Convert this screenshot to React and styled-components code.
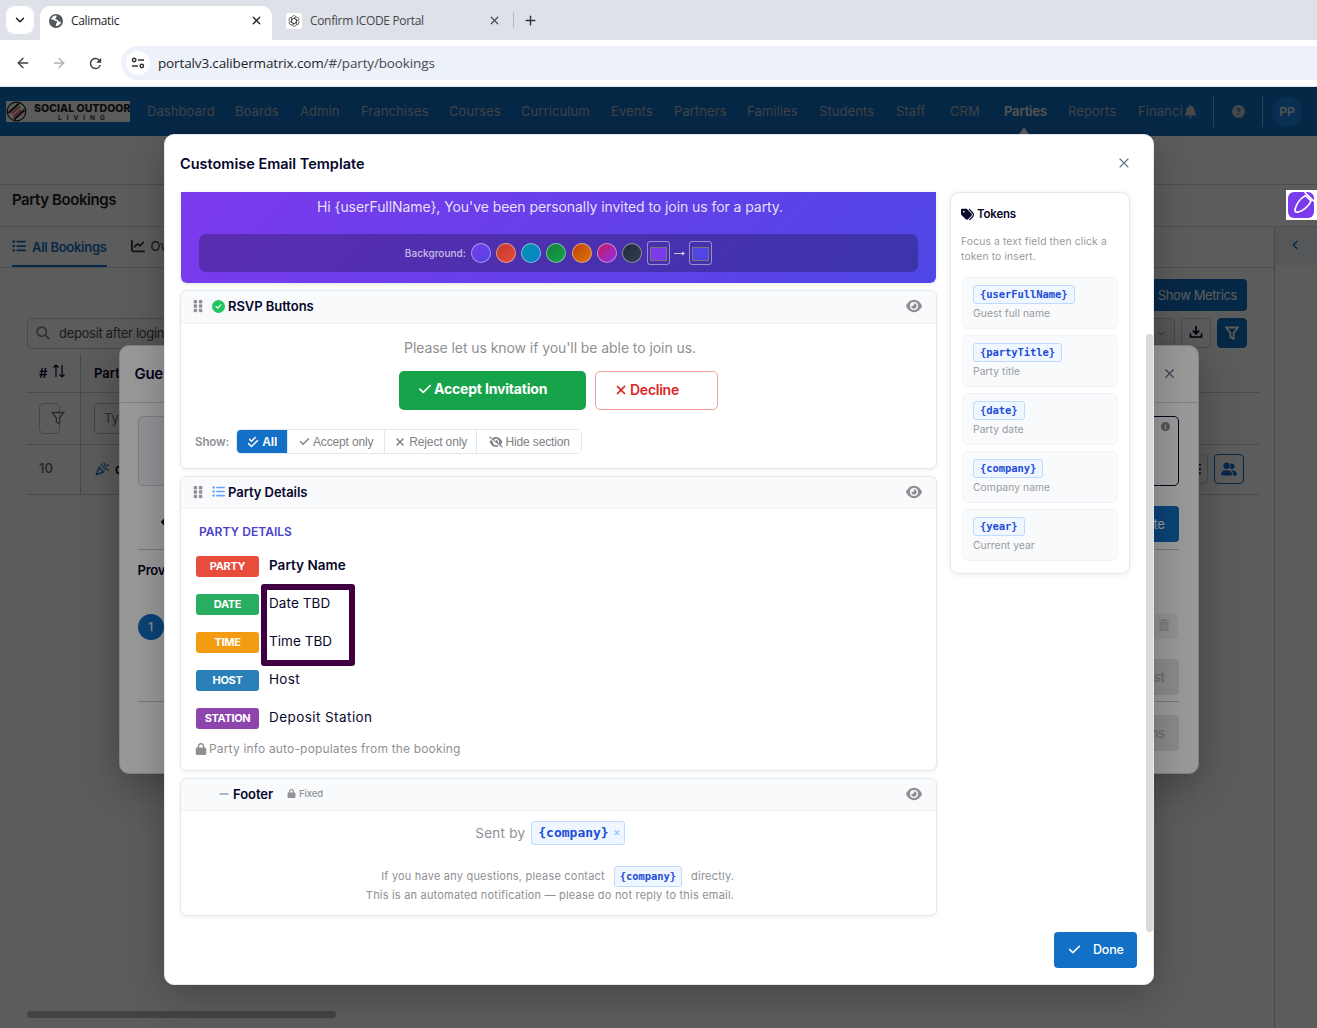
import React, { useState } from "react";
import styled, { createGlobalStyle } from "styled-components";
import {
  FaArrowLeft, FaBars, FaBell, FaChartLine, FaCheck, FaCheckDouble, FaCircleCheck, FaCircleInfo,
  FaCircleQuestion, FaEye, FaEyeSlash, FaGripVertical, FaListUl, FaLock, FaMinus,
  FaTags, FaTrashCan, FaUserGroup, FaXmark,
} from "react-icons/fa6";
import { LuArrowLeft, LuArrowRight, LuChevronDown, LuChevronLeft, LuPlus, LuX } from "react-icons/lu";
import { MdOutlineCelebration, MdRefresh } from "react-icons/md";

const GlobalStyle = createGlobalStyle`
  * { box-sizing: border-box; }
  body {
    margin: 0;
    overflow: hidden;
    font-family: Inter, sans-serif;
    font-size: 13px;
    color: #07072b;
  }
  svg { display: block; flex: none; }
  button { font-family: inherit; padding: 0; margin: 0; }
`;

const Window = styled.div`
  display: flex;
  flex-direction: column;
  width: 1317px;
  height: 1028px;
  overflow: hidden;
  background: #fff;
`;

/* browser chrome */

const TabStrip = styled.div`
  display: flex;
  align-items: flex-end;
  height: 40px;
  flex: none;
  padding-left: 6px;
  background: #dee1e8;
  font-family: "Open Sans", sans-serif;
`;

const TabSearch = styled.div`
  display: flex;
  align-items: center;
  justify-content: center;
  width: 28px;
  height: 28px;
  margin-bottom: 6px;
  border-radius: 9px;
  background: #fff;
  color: #1f1f1f;
`;

const BrowserTab = styled.div`
  display: flex;
  align-items: center;
  width: ${({ $width }) => $width}px;
  height: 34px;
  margin-left: ${({ $left }) => $left}px;
  padding: 0 9px 5px;
  border-radius: 10px 10px 0 0;
  background: ${({ $active }) => ($active ? "#fff" : "transparent")};
  color: ${({ $active }) => ($active ? "#1f1f1f" : "#45474a")};
`;

const TabTitle = styled.span`
  flex: 1;
  margin-left: 8px;
  font-size: 12px;
  line-height: 16px;
  letter-spacing: -0.33px;
`;

const TabEdge = styled.div`
  width: 1px;
  height: 16px;
  margin: 0 9px 12px 3px;
  background: #b8b9bd;
`;

const NewTab = styled.div`
  margin-bottom: 12px;
  color: #333;
`;

const Toolbar = styled.div`
  display: flex;
  align-items: center;
  height: 47px;
  flex: none;
  padding-left: 15px;
  border-bottom: 1px solid #dfe3e6;
  background: #fff;
  color: #3c4043;
`;

const ToolIcon = styled.div`
  width: 36px;
  color: ${({ $dim }) => ($dim ? "#aeb0b2" : "#3c4043")};
`;

const AddressBar = styled.div`
  display: flex;
  align-items: center;
  flex: 1;
  height: 34px;
  margin-left: -2px;
  padding-left: 5px;
  border-radius: 17px 0 0 17px;
  background: #ecf1fa;
  font-family: "Open Sans", sans-serif;
  font-size: 13.5px;
  letter-spacing: -0.14px;
  color: #1f1f1f;

  span { color: #474a4e; }
`;

const SiteInfo = styled.div`
  display: flex;
  align-items: center;
  justify-content: center;
  width: 24px;
  height: 24px;
  margin-right: 8px;
  border-radius: 50%;
  background: #fff;
`;

/* application */

const Viewport = styled.div`
  position: relative;
  flex: 1;
  min-height: 0;
`;

const Page = styled.div`
  display: flex;
  flex-direction: column;
  height: 100%;
  background: #fff;
`;

const Navbar = styled.nav`
  display: flex;
  align-items: center;
  height: 49px;
  flex: none;
  padding-left: 6px;
  background: #1270c6;
`;

const Brand = styled.div`
  display: flex;
  align-items: center;
  width: 124px;
  height: 21px;
  margin-right: 17px;
  overflow: hidden;
  background: #fdfdfd;
  color: #222;
`;

const BrandText = styled.div`
  margin: 1px 0 0 7px;
  font-size: 10.5px;
  font-weight: 800;
  line-height: 11px;
  letter-spacing: 0.05px;
  white-space: nowrap;

  small {
    display: block;
    padding-left: 24px;
    font-size: 6.5px;
    font-weight: 600;
    line-height: 8px;
    letter-spacing: 5px;
  }
`;

const NavItem = styled.div`
  position: relative;
  flex: none;
  width: ${({ $width }) => $width}px;
  height: 49px;
  line-height: 49px;
  letter-spacing: ${({ $active }) => ($active ? "-0.15px" : "0.08px")};
  overflow: hidden;
  white-space: nowrap;
  color: ${({ $active }) => ($active ? "#eee" : "#b4bac0")};
  font-weight: ${({ $active }) => ($active ? 600 : 400)};

  &::after {
    content: "";
    display: ${({ $active }) => ($active ? "block" : "none")};
    position: absolute;
    left: 14px;
    bottom: 0;
    border: 6px solid transparent;
    border-top: 0;
    border-bottom-color: #fff;
    border-bottom-width: 9px;
  }
`;

const NavTools = styled.div`
  display: flex;
  align-items: center;
  height: 31px;
  color: #c6c8ca;
`;

const NavTool = styled.div`
  display: flex;
  align-items: center;
  justify-content: center;
  width: ${({ $width }) => $width}px;
  height: 31px;
  border-right: 1px solid rgba(255, 255, 255, 0.5);
`;

const Avatar = styled.div`
  width: 30px;
  height: 30px;
  margin-left: 9px;
  border-radius: 50%;
  background: #1a86e8;
  color: #e6e6e6;
  font-size: 12px;
  font-weight: 600;
  line-height: 30px;
  text-align: center;
`;

const TopBand = styled.div`
  height: 49px;
  flex: none;
  border-bottom: 1px solid #d2d5da;
`;

const PageTitle = styled.div`
  height: 42px;
  flex: none;
  padding: 5px 12px;
  border-bottom: 1px solid #d2d5da;
  font-size: 15px;
  font-weight: 600;
  line-height: 20px;
  letter-spacing: -0.42px;
  color: #222;
`;

const PageBody = styled.div`
  display: flex;
  flex: 1;
  min-height: 0;
`;

const Main = styled.div`
  display: flex;
  flex-direction: column;
  width: 1274px;
`;

const PageTabs = styled.div`
  display: flex;
  height: 41px;
  flex: none;
  padding-left: 12px;
  border-bottom: 1px solid #d2d5da;
`;

const PageTab = styled.div`
  display: flex;
  align-items: center;
  gap: 6px;
  height: 40px;
  margin-right: 24px;
  padding-bottom: 1px;
  border-bottom: 2px solid ${({ $active }) => ($active ? "#1270c6" : "transparent")};
  color: ${({ $active }) => ($active ? "#1270c6" : "#333")};
  font-weight: ${({ $active }) => ($active ? 600 : 400)};
  letter-spacing: -0.28px;

  span { padding-top: ${({ $active }) => ($active ? 3 : 1)}px; }
`;

const ActionRow = styled.div`
  display: flex;
  align-items: center;
  justify-content: space-between;
  gap: 6px;
  height: ${({ $height }) => $height}px;
  margin-top: ${({ $top }) => $top}px;
  padding: 0 27px;
`;

const RightGroup = styled.div`
  display: flex;
  gap: 6px;
  margin-left: auto;
`;

const PrimaryButton = styled.button`
  display: flex;
  align-items: center;
  justify-content: flex-end;
  width: ${({ $width }) => $width}px;
  height: ${({ $height }) => $height}px;
  padding-right: ${({ $pad }) => $pad}px;
  border: 0;
  border-radius: 4px;
  background: #1270c6;
  color: #fff;
  font-size: 13px;
  letter-spacing: -0.4px;
`;

const MutedButton = styled(PrimaryButton)`
  background: #e6e6e6;
  color: #b4b4b4;
  font-weight: 500;
`;

const SearchField = styled.div`
  display: flex;
  align-items: center;
  gap: 9px;
  width: 230px;
  height: 31px;
  padding-left: 8px;
  border: 1px solid #cbcdd2;
  border-radius: 5px;
  color: #505050;
  letter-spacing: -0.3px;
`;

const SquareButton = styled.div`
  display: flex;
  align-items: center;
  justify-content: center;
  width: ${({ $width }) => $width || 30}px;
  height: 30px;
  border: 1px solid ${({ $border }) => $border || "#cbcdd2"};
  border-radius: 4px;
  background: ${({ $fill }) => $fill || "transparent"};
  color: ${({ $color }) => $color || "#07072b"};
`;

const Table = styled.div`
  display: flex;
  flex-direction: column;
  width: 1233px;
  margin: 5px 0 0 27px;
`;

const TableRow = styled.div`
  display: flex;
  height: ${({ $height }) => $height}px;
  border-bottom: 1px solid #cfd1d4;
`;

const IndexCell = styled.div`
  display: flex;
  align-items: center;
  gap: 5px;
  width: 54px;
  padding: 0 0 ${({ $muted }) => ($muted ? 4 : 1)}px 12px;
  border-right: 1px solid #c8cace;
  color: ${({ $muted }) => ($muted ? "#666" : "#07072b")};
  font-weight: ${({ $muted }) => ($muted ? 500 : 600)};
`;

const TableCell = styled.div`
  display: flex;
  align-items: center;
  flex: 1;
  gap: 5px;
  padding: 0 16px 1px 13px;
  font-weight: 600;
`;

const FilterBox = styled.div`
  display: flex;
  align-items: center;
  width: ${({ $width }) => $width}px;
  height: 31px;
  padding-left: ${({ $pad }) => $pad}px;
  border: 1px solid #c2c4c9;
  border-radius: 5px;
  font-weight: 400;
  color: #77797f;
`;

const BottomScroll = styled.div`
  width: 309px;
  height: 7px;
  margin: auto 0 10px 27px;
  border-radius: 4px;
  background: #bbb;
`;

const SidePanel = styled.div`
  width: 43px;
  border-left: 1px solid #c8cace;
`;

const SideToggle = styled.div`
  display: flex;
  align-items: center;
  justify-content: center;
  height: 38px;
  padding: 0 2px 2px 0;
  background: #edf3f8;
  color: #1270c6;
`;

const Overlay = styled.div`
  position: absolute;
  inset: 0;
  display: flex;
  align-items: center;
  justify-content: center;
  padding-top: 4px;
  background: rgba(0, 0, 0, 0.4);
`;

/* guests dialog, behind */

const GuestDialog = styled.div`
  display: flex;
  flex-direction: column;
  width: 1080px;
  height: 429px;
  border: 1px solid #d5d8dd;
  border-radius: 10px;
  background: #fff;
  box-shadow: 0 10px 40px rgba(0, 0, 0, 0.3);
`;

const GuestHeader = styled.div`
  display: flex;
  align-items: center;
  justify-content: space-between;
  height: 57px;
  padding: 0 21px 1px 15px;
  border-bottom: 1px solid #d5d8dd;
  font-size: 15px;
  font-weight: 600;
  letter-spacing: -0.3px;
`;

const GuestBody = styled.div`
  display: flex;
  flex-direction: column;
  padding: 13px 19px 0 18px;
`;

const GuestRow = styled.div`
  display: flex;
  align-items: center;
  justify-content: space-between;
  height: ${({ $height }) => $height}px;
  padding: ${({ $top }) => $top || 0}px ${({ $pad }) => $pad || 0}px ${({ $bottom }) => $bottom || 0}px 0;
  border-bottom: ${({ $line }) => ($line ? "1px solid #c6c8cc" : "0")};
`;

const InfoCard = styled.div`
  display: flex;
  justify-content: flex-end;
  width: 340px;
  height: 70px;
  padding: 5px 8px;
  border: 1px solid ${({ $selected }) => ($selected ? "#07072b" : "#cfd4da")};
  border-radius: 5px;
  background: ${({ $selected }) => ($selected ? "#fff" : "#f3f6fb")};
  color: #8b8f96;
`;

const GuestLabel = styled.div`
  font-weight: 600;
  letter-spacing: -0.2px;
`;

const StepCircle = styled.div`
  width: 26px;
  height: 26px;
  border-radius: 50%;
  background: #1270c6;
  color: #ddd;
  font-size: 12px;
  font-weight: 600;
  line-height: 25px;
  text-align: center;
`;

const TrashButton = styled.div`
  display: flex;
  align-items: center;
  justify-content: flex-end;
  width: 40px;
  height: 25px;
  padding: 0 8px 3px 0;
  border-radius: 4px;
  background: #f2f2f2;
  color: #ccc;
`;

/* template dialog */

const Dialog = styled.div`
  display: flex;
  flex-direction: column;
  width: 990px;
  height: 851px;
  margin-left: 1px;
  border: 1px solid #e2e8f0;
  border-radius: 10px;
  background: #fff;
  box-shadow: 0 10px 40px rgba(0, 0, 0, 0.25);
`;

const DialogHeader = styled.div`
  display: flex;
  align-items: center;
  justify-content: space-between;
  height: 57px;
  flex: none;
  padding: 0 21px 1px 15px;
  color: #64748b;

  h2 {
    margin: 0;
    font-size: 14.5px;
    font-weight: 600;
    color: #07072b;
  }
`;

const DialogBody = styled.div`
  display: flex;
  height: 740px;
  flex: none;
  padding-left: 15px;
`;

const Editor = styled.div`
  width: 757px;
  height: 740px;
`;

const Sidebar = styled.div`
  width: 180px;
  margin-left: 13px;
`;

const ScrollTrack = styled.div`
  margin-left: auto;
  padding-top: 142px;
`;

const ScrollThumb = styled.div`
  width: 7px;
  height: 598px;
  border-radius: 4px;
  background: #dadada;
`;

const Hero = styled.div`
  display: flex;
  flex-direction: column;
  height: 91px;
  margin: 0 1px 7px;
  padding: 5px 18px 11px;
  border-radius: 0 0 6px 6px;
  background: linear-gradient(135deg, #7c3aed 0%, #4f46e5 100%);
  box-shadow: 0 1px 4px rgba(15, 23, 42, 0.12);
  color: rgba(255, 255, 255, 0.85);
  text-align: center;
`;

const HeroText = styled.div`
  flex: 1;
  padding-right: 17px;
  font-size: 14px;
  line-height: 19px;
  letter-spacing: -0.07px;
`;

const SwatchBar = styled.div`
  display: flex;
  align-items: center;
  justify-content: center;
  gap: 4px;
  height: 38px;
  border-radius: 7px;
  background: rgba(0, 0, 0, 0.25);
  font-size: 10px;
  font-weight: 500;
  letter-spacing: 0.05px;
  color: rgba(255, 255, 255, 0.7);
`;

const Swatch = styled.span`
  width: 20px;
  height: 20px;
  margin: 0 0.2px 0 1px;
  border: 1px solid rgba(255, 255, 255, 0.45);
  border-radius: 50%;
  background: linear-gradient(135deg, ${({ $from }) => $from}, ${({ $to }) => $to});
`;

const ColorWell = styled.span`
  width: 23px;
  height: 24px;
  margin-left: ${({ $gap }) => $gap || 0}px;
  padding: 5px 2px;
  border: 1px solid rgba(255, 255, 255, 0.45);
  border-radius: 3px;

  &::before {
    content: "";
    display: block;
    height: 12px;
    border: 1px solid #767676;
    background: ${({ $color }) => $color};
  }
`;

const Section = styled.section`
  height: ${({ $height }) => $height}px;
  margin-bottom: 7px;
  border: 1px solid #e2e8f0;
  border-radius: 7px;
  background: #fff;
  box-shadow: 0 1px 4px rgba(15, 23, 42, 0.07);
`;

const SectionHeader = styled.div`
  display: flex;
  align-items: center;
  height: ${({ $height }) => $height || 32}px;
  padding: 0 14px 2px ${({ $left }) => $left || 10}px;
  border-bottom: 1px solid #eef2f6;
  border-radius: 7px 7px 0 0;
  background: #f8fafc;
  color: #8f9094;
`;

const SectionName = styled.span`
  margin-left: 3px;
  margin-right: ${({ $tagged }) => ($tagged ? 0 : "auto")};
  font-size: 13px;
  font-weight: 600;
  letter-spacing: -0.05px;
  color: #07072b;
`;

const SectionIcon = styled.span`
  margin-left: ${({ $gap }) => $gap}px;
  color: ${({ $color }) => $color};
`;

const FixedTag = styled.span`
  display: flex;
  align-items: center;
  gap: 3px;
  margin: 0 auto 0 14px;
  font-size: 9.5px;
  font-weight: 500;
  letter-spacing: -0.1px;
  color: #909296;
`;

const RsvpBody = styled.div`
  padding: 14px;
`;

const RsvpText = styled.div`
  padding-right: 17px;
  font-size: 14px;
  line-height: 19px;
  letter-spacing: -0.07px;
  text-align: center;
  color: #8f9094;
`;

const ReplyButtons = styled.div`
  display: flex;
  justify-content: center;
  gap: 9px;
  margin: 14px 0 19px;
`;

const ReplyButton = styled.button`
  display: flex;
  align-items: center;
  gap: 2px;
  width: ${({ $accept }) => ($accept ? 187 : 123)}px;
  height: 39px;
  padding: 0 0 ${({ $accept }) => ($accept ? 4 : 2)}px ${({ $accept }) => ($accept ? 19 : 18)}px;
  border: ${({ $accept }) => ($accept ? "0" : "1px solid #f79d9d")};
  border-radius: 5px;
  background: ${({ $accept }) => ($accept ? "#16a34a" : "#fff")};
  color: ${({ $accept }) => ($accept ? "#fff" : "#dc2626")};
  font-size: 14px;
  font-weight: ${({ $accept }) => ($accept ? 700 : 600)};
  letter-spacing: ${({ $accept }) => ($accept ? "-0.18px" : "-0.25px")};
`;

const ShowRow = styled.div`
  display: flex;
  align-items: center;
  font-size: 11.5px;
  font-weight: 600;
  letter-spacing: -0.1px;
  color: #8f9094;
`;

const Segments = styled.div`
  display: flex;
  height: 25px;
  margin-left: 7px;
  border: 1px solid #e2e8f0;
  border-radius: 5px;
  overflow: hidden;
`;

const Segment = styled.button`
  display: flex;
  align-items: center;
  justify-content: center;
  gap: 3px;
  width: ${({ $width }) => $width}px;
  border: 0;
  border-left: ${({ $active }) => ($active ? "0" : "1px solid #e2e8f0")};
  background: ${({ $active }) => ($active ? "#1270c6" : "#fff")};
  color: ${({ $active }) => ($active ? "#fff" : "#808186")};
  font-family: "Liberation Sans", sans-serif;
  font-size: 12px;
  font-weight: ${({ $active }) => ($active ? 700 : 400)};
  letter-spacing: -0.15px;
  white-space: nowrap;
`;

const DetailsBody = styled.div`
  padding: 15px;
`;

const DetailsTitle = styled.div`
  margin: 0 0 17px 3px;
  font-size: 12px;
  font-weight: 600;
  line-height: 15px;
  letter-spacing: 0.04px;
  color: #4b3fce;
`;

const DetailRow = styled.div`
  display: flex;
  height: 38px;
`;

const Badge = styled.span`
  width: 63px;
  height: 21px;
  border-radius: 3px;
  background: ${({ $color }) => $color};
  color: #fff;
  font-size: 11px;
  font-weight: 700;
  line-height: 21px;
  letter-spacing: -0.35px;
  text-align: center;
`;

const DetailValue = styled.span`
  margin-left: 10px;
  font-size: 13.5px;
  font-weight: ${({ $bold }) => ($bold ? 600 : 400)};
  line-height: 19px;
  letter-spacing: ${({ $spacing }) => $spacing}px;
`;

const Note = styled.div`
  display: flex;
  align-items: center;
  gap: 2px;
  margin: -5px 0 0 -1px;
  font-size: 12px;
  line-height: 16px;
  letter-spacing: 0.17px;
  color: #8f9094;
`;

const FooterBody = styled.div`
  display: flex;
  flex-direction: column;
  align-items: center;
  padding: 10px 17px 0 0;
  color: #8f9094;
`;

const SentBy = styled.div`
  display: flex;
  align-items: center;
  gap: 6px;
  height: 24px;
  font-size: 13.5px;
  letter-spacing: 0.24px;
`;

const Chip = styled.span`
  display: inline-flex;
  align-items: center;
  gap: 5px;
  height: ${({ $height }) => $height || 19}px;
  padding: 0 ${({ $pad }) => $pad || 6}px 1px;
  border: 1px solid #bfdbfe;
  border-radius: 3px;
  background: #eff6ff;
  color: #1d4ed8;
  font-family: "DejaVu Sans Mono", monospace;
  font-size: ${({ $size }) => $size || 10.5}px;
  font-weight: 700;
  letter-spacing: ${({ $size }) => ($size ? 0 : -0.07)}px;

  i {
    margin-right: -2px;
    font-style: normal;
    font-size: 10px;
    color: #93c5fd;
  }
`;

const SmallPrint = styled.div`
  margin-top: 21px;
  font-size: 11px;
  letter-spacing: 0.2px;
  line-height: 18px;

  ${Chip} { margin: 0 9px; padding: 0 5px 1px; }
  div { display: flex; align-items: center; justify-content: flex-end; height: 20px; }
  div + div { height: 18px; }
`;

const TokenPanel = styled.div`
  height: 382px;
  padding: 14px 11px 0 10px;
  border: 1px solid #e2e8f0;
  border-radius: 9px;
  box-shadow: 0 1px 6px rgba(15, 23, 42, 0.08);
`;

const TokenTitle = styled.div`
  display: flex;
  align-items: center;
  gap: 3px;
  font-size: 11.5px;
  font-weight: 600;
  line-height: 15px;
  letter-spacing: -0.2px;
`;

const TokenHint = styled.p`
  margin: 12px 0 13px;
  font-size: 10.3px;
  line-height: 15px;
  letter-spacing: 0.14px;
  color: #999a9e;
`;

const TokenCard = styled.div`
  height: 52px;
  margin: 0 0 6px 1px;
  padding: 7px 10px;
  border: 1px solid #eff3f7;
  border-radius: 6px;
  background: #f8fafc;
  color: #999a9e;

  div {
    margin-top: 3px;
    font-size: 10.3px;
    line-height: 13px;
    letter-spacing: 0.06px;
  }
`;

const DialogFooter = styled.div`
  display: flex;
  justify-content: flex-end;
  padding-right: 16px;
`;

const DoneButton = styled.button`
  display: flex;
  align-items: center;
  gap: 12px;
  width: 83px;
  height: 36px;
  padding: 0 0 1px 14px;
  border: 0;
  border-radius: 4px;
  background: #1270c6;
  color: #fff;
  font-size: 12.5px;
  font-weight: 500;
  letter-spacing: -0.2px;
`;

/* things floating above the page */

const Marker = styled.div`
  position: absolute;
  left: 261px;
  top: 497px;
  width: 94px;
  height: 82px;
  border: 6px solid #3e0040;
  border-radius: 3px;
`;

const EditTool = styled.div`
  position: absolute;
  right: 0;
  top: 103px;
  width: 31px;
  height: 30px;
  padding: 2px;
  background: #fff;
`;

const NAV = [
  ["Dashboard", 88], ["Boards", 65], ["Admin", 61], ["Franchises", 88], ["Courses", 72],
  ["Curriculum", 90], ["Events", 63], ["Partners", 73], ["Families", 72], ["Students", 77],
  ["Staff", 54], ["CRM", 54], ["Parties", 64], ["Reports", 70], ["Financials", 45],
];

const SWATCHES = [
  ["#7c3aed", "#4f46e5"], ["#c0392b", "#e74c3c"], ["#0891b2", "#0284c7"], ["#15803d", "#16a34a"],
  ["#c2410c", "#d97706"], ["#be185d", "#9333ea"], ["#1e293b", "#334155"],
];

const DETAILS = [
  ["PARTY", "#e74c3c", "Party Name", 0.03],
  ["DATE", "#27ae60", "Date TBD", 0.1],
  ["TIME", "#f39c12", "Time TBD", 0.05],
  ["HOST", "#2980b9", "Host", 0.3],
  ["STATION", "#8e44ad", "Deposit Station", 0.43],
];

const TOKENS = [
  ["userFullName", "Guest full name"],
  ["partyTitle", "Party title"],
  ["date", "Party date"],
  ["company", "Company name"],
  ["year", "Current year"],
];

const FILTERS = [
  ["All", 50, <FaCheckDouble size={12} />],
  ["Accept only", 97, <FaCheck size={11} />],
  ["Reject only", 92, <FaXmark size={12} />],
  ["Hide section", 105, <FaEyeSlash size={14} />],
];

const GlobeIcon = () => (
  <svg width="14" height="14" viewBox="0 0 14 14">
    <circle cx="7" cy="7" r="7" fill="#54585d" />
    <path d="M7.4 1.6C5 1.5 2.7 3 2 5.2l2.4.5c1 .3 1.2 1.2 2.5 1.3 1.6.1 1.7 1.2.8 1.9-.8.6-.8 1.6-.8 3.2 2.5.1 4.7-1.7 5.2-4L9.6 7.5C8.800 6.500 8.900 5.600 7.500 5.500 6.100 5.400 5.800 4.500 6.800 3.900 7.600 3.400 7.700 2.500 7.400 1.600z" fill="#fff" />
  </svg>
);

const ChatIcon = () => (
  <svg width="16" height="16" viewBox="0 0 16 16">
    <rect width="16" height="16" rx="2" fill="#fff" />
    <g fill="none" stroke="#444" strokeWidth="0.75">
      {[0, 60, 120, 180, 240, 300].map((a) => (
        <path key={a} transform={`rotate(${a} 8 8)`} d="M5.6 9.3V5a2.300 2.300 0 0 1 4.300-1.200M5.600 6.700l3.300-1.900" />
      ))}
    </g>
  </svg>
);

const TuneIcon = () => (
  <svg width="14" height="14" viewBox="0 0 14 14" fill="none" stroke="#333" strokeWidth="1.5">
    <circle cx="3.200" cy="4" r="1.700" />
    <path d="M7 4h6M1 10h6" />
    <circle cx="10.800" cy="10" r="1.700" />
  </svg>
);

const BrandMark = () => (
  <svg width="21" height="21" viewBox="0 0 21 21" fill="none">
    <circle cx="10.500" cy="10.500" r="9.300" stroke="#222" strokeWidth="1.200" />
    <path d="M2.500 12 13 2.500M8 18.500 18.500 9" stroke="#222" strokeWidth="2.200" />
    <path d="M6 12.500 14 5.500M7.500 15.500 15 9" stroke="#e0623a" strokeWidth="1.700" />
  </svg>
);

const SearchIcon = () => (
  <svg width="14" height="14" viewBox="0 0 14 14" fill="none" stroke="#7b8794" strokeWidth="1.700">
    <circle cx="5.700" cy="5.700" r="4.600" />
    <path d="m9.200 9.200 4 4" />
  </svg>
);

const SortIcon = () => (
  <svg width="14" height="20" viewBox="0 0 14 20" fill="none" stroke="#07072b" strokeWidth="1.200">
    <path d="M4 14V2M1.500 4.500 4 2l2.500 2.500M10 2v12M7.500 11.500 10 14l2.500-2.500" />
  </svg>
);

const FunnelIcon = ({ width = 1.3 }) => (
  <svg width="14" height="14" viewBox="0 0 14 14" fill="none" stroke="currentColor" strokeWidth={width}>
    <path d="M1.200 1.500h11.600L8.600 7v5.800l-3.200-1.600V7z" />
  </svg>
);

const DownloadIcon = () => (
  <svg width="14" height="16" viewBox="0 0 14 16" fill="none" stroke="currentColor" strokeWidth="1.700">
    <path d="M7 1v7.500M3.800 5.600 7 8.700l3.200-3.100M1.500 8.500v3.500h11V8.500" />
  </svg>
);

const LongArrow = () => (
  <svg width="11" height="7" viewBox="0 0 11 7" fill="none" stroke="currentColor">
    <path d="M0 3.500h10" />
    <path d="m8 1.500 3 2-3 2z" fill="currentColor" stroke="none" />
  </svg>
);

const PenIcon = () => (
  <svg width="26" height="26" viewBox="0 0 26 26">
    <rect width="26" height="26" rx="6" fill="#7c3aed" />
    <path
      d="M17.500 3.500 23 9c-2 4.500-7 9.500-12.500 11-2.800.7-4-.5-3.300-3.200C8.500 11.500 13 6 17.500 3.500zM16.500 0l9.500 9.500"
      fill="none" stroke="#fff" strokeWidth="1.700"
    />
  </svg>
);

const Browser = () => (
  <>
    <TabStrip>
      <TabSearch><LuChevronDown size={14} strokeWidth={2.5} /></TabSearch>
      <BrowserTab $active $width={232} $left={6}>
        <GlobeIcon />
        <TabTitle>Calimatic</TabTitle>
        <LuX size={13} strokeWidth={2.3} />
      </BrowserTab>
      <BrowserTab $width={233} $left={5}>
        <ChatIcon />
        <TabTitle>Confirm ICODE Portal</TabTitle>
        <LuX size={13} strokeWidth={2.2} />
      </BrowserTab>
      <TabEdge />
      <NewTab><LuPlus size={15} strokeWidth={2.2} /></NewTab>
    </TabStrip>
    <Toolbar>
      <ToolIcon><LuArrowLeft size={16} /></ToolIcon>
      <ToolIcon $dim><LuArrowRight size={16} /></ToolIcon>
      <ToolIcon><MdRefresh size={17} /></ToolIcon>
      <AddressBar>
        <SiteInfo><TuneIcon /></SiteInfo>
        portalv3.calibermatrix.com<span>/#/party/bookings</span>
      </AddressBar>
    </Toolbar>
  </>
);

const Bookings = () => (
  <Page>
    <Navbar>
      <Brand>
        <BrandMark />
        <BrandText>SOCIAL OUTDOOR<small>LIVING</small></BrandText>
      </Brand>
      {NAV.map(([name, width]) => (
        <NavItem key={name} $width={width} $active={name === "Parties"}>{name}</NavItem>
      ))}
      <NavTools>
        <NavTool $width={31}><FaBell size={13} style={{ marginRight: 15 }} /></NavTool>
        <NavTool $width={49}><FaCircleQuestion size={13} /></NavTool>
        <Avatar>PP</Avatar>
      </NavTools>
    </Navbar>
    <TopBand />
    <PageTitle>Party Bookings</PageTitle>
    <PageBody>
      <Main>
        <PageTabs>
          <PageTab $active><FaListUl size={14} /> <span>All Bookings</span></PageTab>
          <PageTab><FaChartLine size={14} /> <span>Overview</span></PageTab>
        </PageTabs>
        <ActionRow $top={11} $height={32}>
          <RightGroup>
            <PrimaryButton $width={130} $height={32} $pad={10}>Show Metrics</PrimaryButton>
          </RightGroup>
        </ActionRow>
        <ActionRow $top={6} $height={32}>
          <SearchField><SearchIcon /> deposit after login</SearchField>
          <RightGroup>
            <SquareButton $width={50} $fill="#f4f7fa" $color="#777"><LuChevronDown size={11} style={{ marginLeft: 22 }} /></SquareButton>
            <SquareButton><DownloadIcon /></SquareButton>
            <SquareButton $fill="#1270c6" $border="#1270c6" $color="#fff"><FunnelIcon width={1.8} /></SquareButton>
          </RightGroup>
        </ActionRow>
        <Table>
          <TableRow $height={39}>
            <IndexCell># <SortIcon /></IndexCell>
            <TableCell>Party</TableCell>
          </TableRow>
          <TableRow $height={52}>
            <IndexCell><FilterBox $width={21} $pad={11}><FunnelIcon /></FilterBox></IndexCell>
            <TableCell><FilterBox $width={120} $pad={9}>Type</FilterBox></TableCell>
          </TableRow>
          <TableRow $height={50}>
            <IndexCell $muted>10</IndexCell>
            <TableCell>
              <MdOutlineCelebration size={16} color="#1270c6" /> deposit
              <RightGroup>
                <SquareButton $width={60}><FaBars size={14} style={{ marginLeft: 34 }} /></SquareButton>
                <SquareButton $border="#1270c6" $color="#1270c6"><FaUserGroup size={16} /></SquareButton>
              </RightGroup>
            </TableCell>
          </TableRow>
        </Table>
        <BottomScroll />
      </Main>
      <SidePanel>
        <SideToggle><LuChevronLeft size={14} strokeWidth={2.5} /></SideToggle>
      </SidePanel>
    </PageBody>
  </Page>
);

const Guests = () => (
  <GuestDialog>
    <GuestHeader>Guests <LuX size={15} color="#64748b" /></GuestHeader>
    <GuestBody>
      <GuestRow $height={70}>
        <InfoCard />
        <InfoCard $selected><FaCircleInfo size={9} /></InfoCard>
      </GuestRow>
      <GuestRow $height={64} $top={12} $line>
        <FaArrowLeft size={16} style={{ marginLeft: 22, marginBottom: 4 }} />
        <PrimaryButton $width={90} $height={36} $pad={14}>Update</PrimaryButton>
      </GuestRow>
      <GuestRow $height={40}><GuestLabel>Provide guests</GuestLabel></GuestRow>
      <GuestRow $height={73} $pad={1}>
        <StepCircle>1</StepCircle>
        <TrashButton><FaTrashCan size={12} /></TrashButton>
      </GuestRow>
      <GuestRow $height={39} $bottom={10} $line>
        <span />
        <MutedButton $width={90} $height={36} $pad={14}>Add Guest</MutedButton>
      </GuestRow>
      <GuestRow $height={62}>
        <span />
        <MutedButton $width={90} $height={36} $pad={14}>Invitations</MutedButton>
      </GuestRow>
    </GuestBody>
  </GuestDialog>
);

const Template = () => {
  const [show, setShow] = useState("All");

  return (
    <Dialog>
      <DialogHeader>
        <h2>Customise Email Template</h2>
        <LuX size={16} strokeWidth={1.7} />
      </DialogHeader>
      <DialogBody>
        <Editor>
          <Hero>
            <HeroText>Hi {"{userFullName}"}, You've been personally invited to join us for a party.</HeroText>
            <SwatchBar>
              Background:
              {SWATCHES.map(([from, to]) => <Swatch key={from} $from={from} $to={to} />)}
              <ColorWell $gap={1} $color="#7c3aed" />
              <LongArrow />
              <ColorWell $color="#4f46e5" />
            </SwatchBar>
          </Hero>

          <Section $height={179}>
            <SectionHeader $height={33}>
              <FaGripVertical size={14} />
              <SectionIcon $gap={7} $color="#22c55e"><FaCircleCheck size={13} /></SectionIcon>
              <SectionName>RSVP Buttons</SectionName>
              <FaEye size={16} />
            </SectionHeader>
            <RsvpBody>
              <RsvpText>Please let us know if you'll be able to join us.</RsvpText>
              <ReplyButtons>
                <ReplyButton $accept><FaCheck size={14} /> Accept Invitation</ReplyButton>
                <ReplyButton><FaXmark size={14} /> Decline</ReplyButton>
              </ReplyButtons>
              <ShowRow>
                Show:
                <Segments>
                  {FILTERS.map(([name, width, icon]) => (
                    <Segment key={name} $width={width} $active={show === name} onClick={() => setShow(name)}>
                      {icon} {name}
                    </Segment>
                  ))}
                </Segments>
              </ShowRow>
            </RsvpBody>
          </Section>

          <Section $height={295}>
            <SectionHeader>
              <FaGripVertical size={14} />
              <SectionIcon $gap={7} $color="#60a5fa"><FaListUl size={13} /></SectionIcon>
              <SectionName>Party Details</SectionName>
              <FaEye size={16} />
            </SectionHeader>
            <DetailsBody>
              <DetailsTitle>PARTY DETAILS</DetailsTitle>
              {DETAILS.map(([label, color, value, spacing], i) => (
                <DetailRow key={label}>
                  <Badge $color={color}>{label}</Badge>
                  <DetailValue $bold={i === 0} $spacing={spacing}>{value}</DetailValue>
                </DetailRow>
              ))}
              <Note><FaLock size={12} /> Party info auto-populates from the booking</Note>
            </DetailsBody>
          </Section>

          <Section $height={138}>
            <SectionHeader $left={37}>
              <SectionIcon $gap={0} $color="#94a3b8"><FaMinus size={12} /></SectionIcon>
              <SectionName $tagged>Footer</SectionName>
              <FixedTag><FaLock size={9} /> Fixed</FixedTag>
              <FaEye size={16} />
            </SectionHeader>
            <FooterBody>
              <SentBy>
                Sent by
                <Chip $height={24} $size={13}>{"{company}"} <i>×</i></Chip>
              </SentBy>
              <SmallPrint>
                <div>If you have any questions, please contact <Chip $height={21}>{"{company}"}</Chip> directly.</div>
                <div>This is an automated notification — please do not reply to this email.</div>
              </SmallPrint>
            </FooterBody>
          </Section>
        </Editor>

        <Sidebar>
          <TokenPanel>
            <TokenTitle><FaTags size={13} /> Tokens</TokenTitle>
            <TokenHint>Focus a text field then click a<br />token to insert.</TokenHint>
            {TOKENS.map(([token, about]) => (
              <TokenCard key={token}>
                <Chip>{`{${token}}`}</Chip>
                <div>{about}</div>
              </TokenCard>
            ))}
          </TokenPanel>
        </Sidebar>
        <ScrollTrack><ScrollThumb /></ScrollTrack>
      </DialogBody>
      <DialogFooter>
        <DoneButton><FaCheck size={13} /> Done</DoneButton>
      </DialogFooter>
    </Dialog>
  );
};

const App = () => (
  <>
    <GlobalStyle />
    <Window>
      <Browser />
      <Viewport>
        <Bookings />
        <Overlay><Guests /></Overlay>
        <Overlay><Template /></Overlay>
        <Marker />
        <EditTool><PenIcon /></EditTool>
      </Viewport>
    </Window>
  </>
);

export default App;
